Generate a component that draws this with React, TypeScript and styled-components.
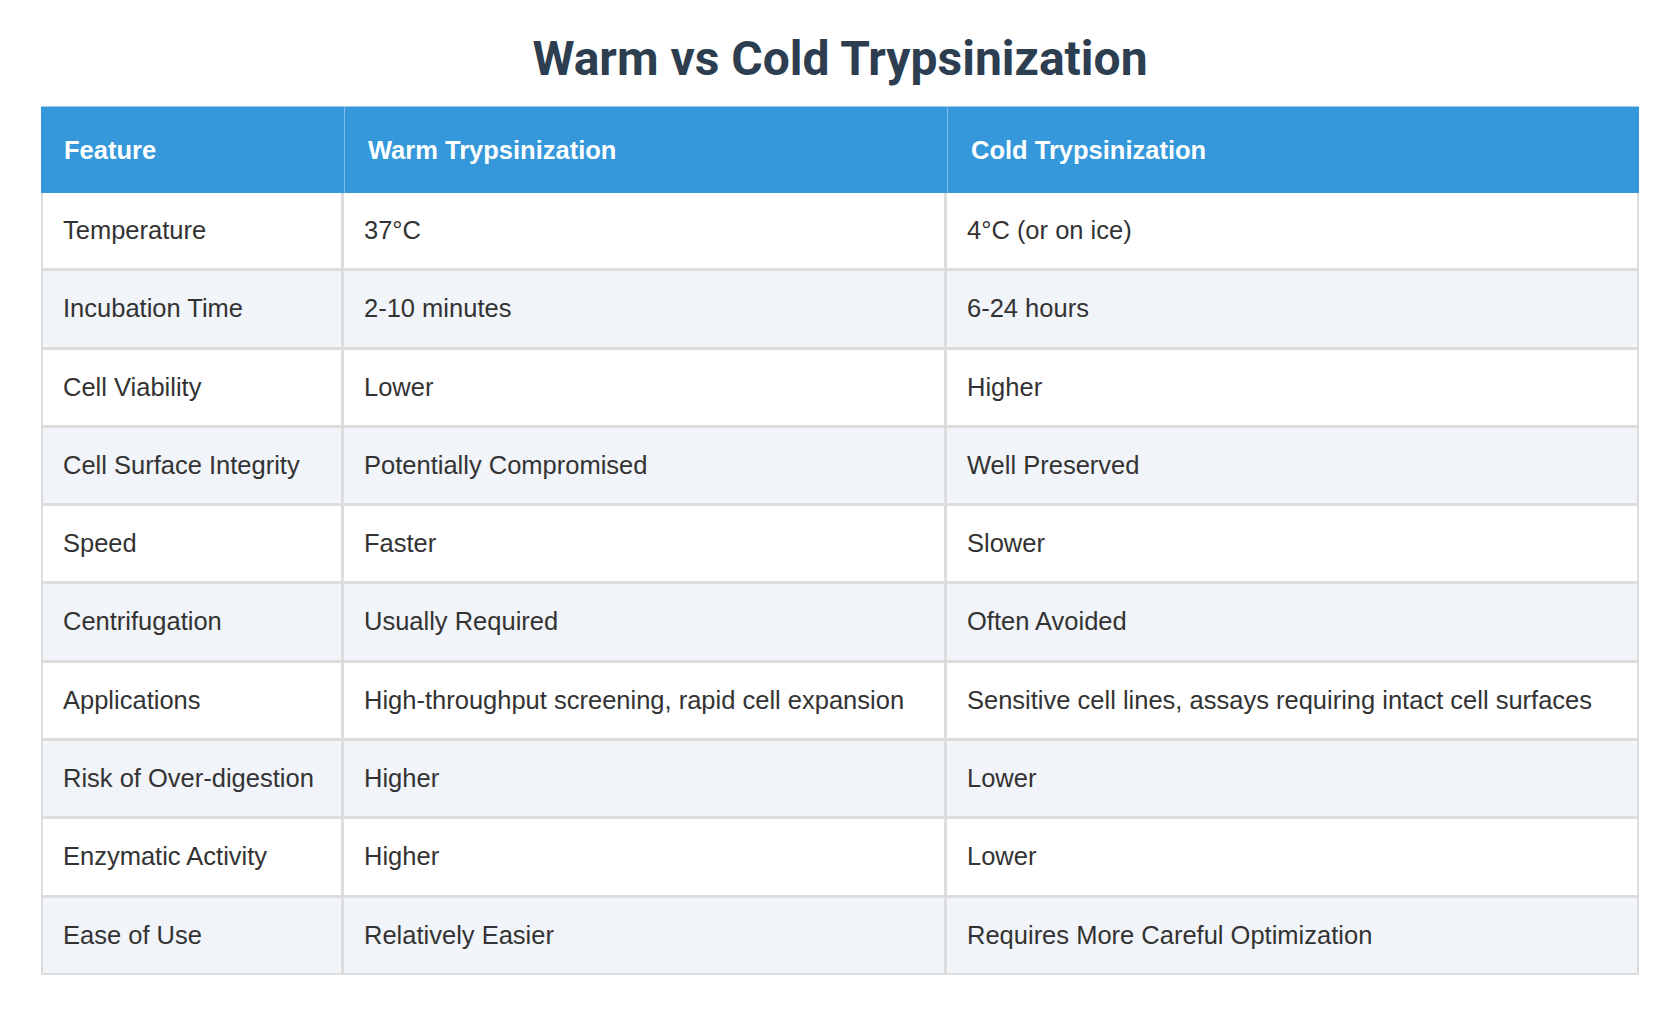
import styled, { createGlobalStyle } from "styled-components";

const GlobalStyle = createGlobalStyle`
    html, body {
        margin: 0;
        padding: 0;
        background: #ffffff;
    }
`;

const Page = styled.div`
    padding: 0 41px;
    font-family: "Liberation Sans", Arial, sans-serif;
`;

const Title = styled.h1`
    margin: 31px 0 19px;
    font-family: Roboto, "Liberation Sans", sans-serif;
    font-size: 48px;
    line-height: 56px;
    font-weight: 700;
    text-align: center;
    color: #2c3e50;
`;

const Table = styled.table`
    width: 1598px;
    table-layout: fixed;
    border-collapse: separate;
    border-spacing: 0;
    font-size: 25.5px;
    color: #333333;
`;

const HeadCell = styled.th<{ $w: number }>`
    width: ${(p) => p.$w}px;
    box-sizing: border-box;
    background: #3498db;
    color: #ffffff;
    font-weight: 700;
    text-align: left;
    padding: 28px 20px 28px 23px;
    line-height: 30px;
    border-top: 1px solid #9cc9ec;
    border-left: 1px solid #7db8e6;
    &:first-child {
        border-left: none;
    }
`;

const Row = styled.tr<{ $alt: boolean }>`
    background: ${(p) => (p.$alt ? "#f1f4f9" : "#ffffff")};
`;

const Cell = styled.td<{ $last: boolean }>`
    padding: 22px 20px;
    line-height: 31.3px;
    white-space: nowrap;
    border-bottom: ${(p) => (p.$last ? "2px" : "3px")} solid #dddddd;
    border-right: 3px solid #dddddd;
    &:first-child {
        border-left: 2px solid #dddddd;
    }
    &:last-child {
        border-right: 2px solid #dddddd;
    }
`;

interface IRow {
    feature: string;
    warm: string;
    cold: string;
}

const rows: IRow[] = [
    { feature: "Temperature", warm: "37°C", cold: "4°C (or on ice)" },
    { feature: "Incubation Time", warm: "2-10 minutes", cold: "6-24 hours" },
    { feature: "Cell Viability", warm: "Lower", cold: "Higher" },
    { feature: "Cell Surface Integrity", warm: "Potentially Compromised", cold: "Well Preserved" },
    { feature: "Speed", warm: "Faster", cold: "Slower" },
    { feature: "Centrifugation", warm: "Usually Required", cold: "Often Avoided" },
    {
        feature: "Applications",
        warm: "High-throughput screening, rapid cell expansion",
        cold: "Sensitive cell lines, assays requiring intact cell surfaces",
    },
    { feature: "Risk of Over-digestion", warm: "Higher", cold: "Lower" },
    { feature: "Enzymatic Activity", warm: "Higher", cold: "Lower" },
    { feature: "Ease of Use", warm: "Relatively Easier", cold: "Requires More Careful Optimization" },
];

function App() {
    return (
        <Page>
            <GlobalStyle />
            <Title>Warm vs Cold Trypsinization</Title>
            <Table>
                <thead>
                    <tr>
                        <HeadCell $w={303}>Feature</HeadCell>
                        <HeadCell $w={603}>Warm Trypsinization</HeadCell>
                        <HeadCell $w={692}>Cold Trypsinization</HeadCell>
                    </tr>
                </thead>
                <tbody>
                    {rows.map((row, i) => {
                        const last = i === rows.length - 1;
                        return (
                            <Row key={row.feature} $alt={i % 2 === 1}>
                                <Cell $last={last}>{row.feature}</Cell>
                                <Cell $last={last}>{row.warm}</Cell>
                                <Cell $last={last}>{row.cold}</Cell>
                            </Row>
                        );
                    })}
                </tbody>
            </Table>
        </Page>
    );
}

export default App;
